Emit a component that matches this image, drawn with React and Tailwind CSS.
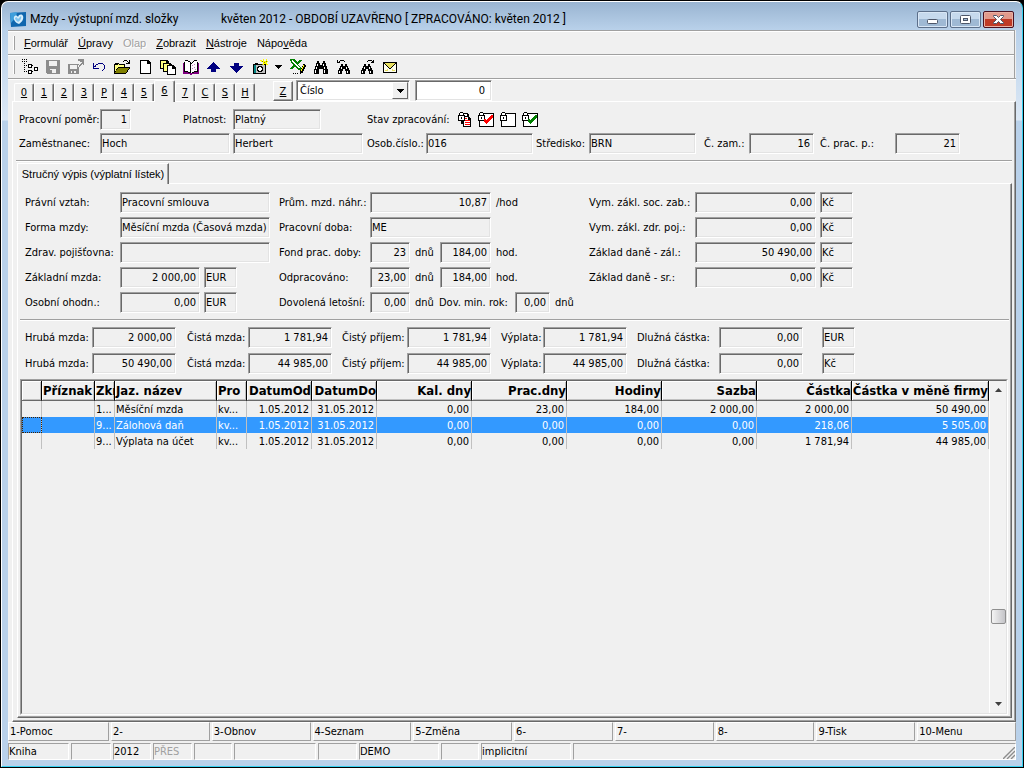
import { useState } from 'react';
import clsx from 'clsx';

const fieldBox =
  'h-[21px] border border-t-[#a0a0a0] border-l-[#a0a0a0] border-r-white border-b-white shadow-[inset_1px_1px_#696969,inset_-1px_-1px_#e3e3e3]';

const Icon = ({ children }) => (
  <svg width="16" height="16" viewBox="0 0 16 16" shapeRendering="crispEdges" className="block shrink-0">
    {children}
  </svg>
);

const BINOCULARS =
  'M4 2h2v2H4zM10 2h2v2h-2zM3 4h4v3H3zM9 4h4v3H9zM7 6h2v4H7zM2 7h5v3H2zM9 7h5v3H9zM1 10h5v5H1zM10 10h5v5h-5z';
const BINOCULARS_SMALL =
  'M5 5h2v2H5zM9 5h2v2H9zM4 7h8v3H4zM3 9h4v3H3zM9 9h4v3H9zM2 11h4v4H2zM10 11h4v4h-4z';

const icons = {
  tree: (
    <Icon>
      <path d="M0 0h1v1H0zM2 0h1v1H2zM4 0h1v1H4zM0 2h1v1H0zM4 2h1v1H4zM2 2h1v1H2zM2 4h1v1H2zM2 6h1v1H2zM4 6h1v1H4zM2 8h1v1H2zM2 10h1v1H2zM2 12h1v1H2zM4 12h1v1H4zM10 6h1v1h-1zM10 12h1v1h-1z" />
      <path d="M6 5h4v4H6zM6 11h4v4H6zM12 8h4v4h-4z" />
      <path fill="#fff" d="M7 6h2v2H7zM7 12h2v2H7zM13 9h2v2h-2z" />
    </Icon>
  ),
  save: (
    <Icon>
      <path fill="#8c8c8c" d="M1 1h14v14H2L1 14z" />
      <path fill="#f0f0f0" d="M4 2h8v5H4zM5 10h6v4H5z" />
      <path fill="#8c8c8c" d="M5 11h2v3H5z" />
    </Icon>
  ),
  export: (
    <Icon>
      <path fill="#8c8c8c" d="M0 5h11v10H0zM10 0h6v6h-1V4l-5 5-1-1 5-5-4-1z" />
      <path fill="#f0f0f0" d="M2 6h7v4H2zM3 12h5v2H3zM10 6h1v2h-1z" />
      <path fill="#8c8c8c" d="M4 12h2v2H4z" />
    </Icon>
  ),
  undo: (
    <Icon>
      <path fill="#000080" d="M2 4h1v5h5v1H2zM3 7h1v1H3zM4 6h1v2H4zM5 5h2v1H5zM7 4h5v1H7zM12 5h1v1h-1zM13 6h1v4h-1zM12 10h1v1h-1zM11 11h1v1h-1z" />
    </Icon>
  ),
  open: (
    <Icon>
      <path d="M0 5h1V4h4v1h6v3h5v1l-4 6H0z" />
      <path fill="#ffff80" d="M1 6h3V5h1v1h5v2H4l-3 5z" />
      <path fill="#808000" d="M4 9h11l-3 5H1z" />
      <path d="M10 1h3v1h-3zM9 2h1v1H9zM13 2h1v1h-1zM15 1h1v4h-4V4h2V3h1z" />
    </Icon>
  ),
  blank: (
    <Icon>
      <path d="M3 1h8l3 3v11H3z" />
      <path fill="#fff" d="M4 2h6v3h3v9H4z" />
    </Icon>
  ),
  copies: (
    <Icon>
      <path d="M0 1h7l2 2v7H0z" />
      <path fill="#ffff80" d="M1 2h5v2h2v5H1z" />
      <path d="M3 4h7l2 2v7H3z" />
      <path fill="#ffff80" d="M4 5h5v2h2v5H4z" />
      <path d="M7 6h6l3 3v7H7z" />
      <path fill="#fff" d="M8 7h4v3h3v5H8z" />
    </Icon>
  ),
  book: (
    <Icon>
      <path fill="#800080" d="M0 4h2v9h4l2 1 2-1h4V4h2v11H10l-2 1-2-1H0z" />
      <path d="M1 3h1v10H1zM14 3h1v10h-1z" />
      <path fill="#fff" d="M2 2h3l3 3 3-4h3v11h-3l-3 2-3-2H2z" />
      <path d="M2 1h3v1H2zM5 2h2v1H5zM7 3h1v11H7zM8 4h1v-1h1V2h1V1h3v1h-3v1h-1v1H9v1H8zM2 12h3v1H2zM5 13h2v1H5zM9 13h2v1H9zM11 12h3v1h-3z" />
      <path fill="#c080c0" d="M9 6h1v1H9zM11 5h1v1h-1zM9 9h1v1H9zM11 8h1v1h-1zM12 10h1v1h-1z" />
    </Icon>
  ),
  up: (
    <Icon>
      <path fill="#000080" d="M7 3h1v1h1v1h1v1h1v1h1v1h1v1h1v1h-4v3H5v-3H1V9h1V8h1V7h1V6h1V5h1V4h1z" />
    </Icon>
  ),
  down: (
    <Icon>
      <path fill="#000080" d="M5 4h5v3h4v1h-1v1h-1v1h-1v1h-1v1H9v1H8v1H7v-1H6v-1H5v-1H4v-1H3V9H2V8H1V7h4z" />
    </Icon>
  ),
  camera: (
    <Icon>
      <path d="M1 5h2V4h3v1h8v10H1z" />
      <path fill="#008080" d="M2 6h2v8H2z" />
      <path fill="#c0c0c0" d="M4 6h9v8H4z" />
      <path d="M6 7h4v1h1v4h-1v1H6v-1H5V8h1z" />
      <path fill="#fff" d="M7 8h2v1h1v2H9v1H7v-1H6V9h1z" />
      <path fill="#ffff00" d="M8 1h2v1H8zM11 0h1v2h2V0h1v2h1v1h-1v2h1v1h-2V5h-2v1h-2V5h1V3H9V2h2z" />
      <path fill="#808000" d="M10 2h1v1h-1zM14 2h1v1h-1zM12 3h1v1h-1zM10 5h1v1h-1z" />
    </Icon>
  ),
  excel: (
    <Icon>
      <path fill="#008000" d="M0 0h4l3 3 3-2h2v1L8 5l4 5v1H8L5 8l-3 2H0V9l3-3-3-5z" />
      <path fill="#fff" d="M2 1h1v1h1v1h1v1h1v1h1v1h1v1h1v1h1v1H9V9H8V8H7V7H6V6H5V5H4V4H3V3H2z" />
      <path d="M13 5h2v1h1v2h-1v2h-1v2h-1v2h-2v1h-1v-4h1V9h1V7h1zM3 14h1v1H3zM5 14h1v1H5zM7 14h1v1H7z" />
      <path fill="#ffff00" d="M13 6h1v2h-1v2h-1v2h-1v-2h1V8h1z" />
    </Icon>
  ),
  find: (
    <Icon>
      <path d={BINOCULARS} />
      <path fill="#fff" d="M4 5h1v2H4zM10 5h1v2h-1zM3 8h1v2H3zM11 8h1v2h-1zM2 11h1v3H2zM11 11h1v3h-1z" />
    </Icon>
  ),
  findPrev: (
    <Icon>
      <path d={BINOCULARS_SMALL} />
      <path fill="#fff" d="M5 8h1v2H5zM10 8h1v2h-1zM3 12h1v2H3zM11 12h1v2h-1z" />
      <path d="M1 1h1v2h2v1H1zM3 2h1V1h4v1h1v1H8V2H4v1H3z" />
    </Icon>
  ),
  findNext: (
    <Icon>
      <path d={BINOCULARS_SMALL} />
      <path fill="#fff" d="M5 8h1v2H5zM10 8h1v2h-1zM3 12h1v2H3zM11 12h1v2h-1z" />
      <path d="M14 1h1v3h-3V3h1V2H9v1H8V2h1V1h4v1h1z" />
    </Icon>
  ),
  mail: (
    <Icon>
      <path d="M1 3h14v11H1z" />
      <path fill="#fffff0" d="M2 4h12v9H2z" />
      <path fill="#e8e060" d="M3 4h10v2h-1v1h-1v1H9v1H7V8H5V7H4V6H3zM3 11h2v-1h1v2H3zM13 11h-2v-1h-1v2h3z" />
      <path d="M2 4h1v1H2zM3 5h1v1H3zM4 6h1v1H4zM5 7h1v1H5zM6 8h1v1H6zM7 9h2v1H7zM9 8h1v1H9zM10 7h1v1h-1zM11 6h1v1h-1zM12 5h1v1h-1zM13 4h1v1h-1z" />
    </Icon>
  ),
};

const Lock = () => (
  <>
    <path d="M2 0h3v1h1v2h1v6H0V3h1V1h1z" />
    <path fill="#fff" d="M2 1h3v2H2zM1 4h5v4H1z" />
    <path d="M3 5h1v2H3z" />
  </>
);

const LockBox = ({ tick }) => (
  <Icon>
    <path d="M5 1h11v14H1V8h1V2h3z" />
    <path fill="#fff" d="M6 2h9v12H2V8h4z" />
    <Lock />
    {tick && <path fill={tick} d="M13 3h2v3h-1v1h-1v1h-1v1h-1v1h-1v1H9v1H8v-1H7v-1H6V7h2v1h1V7h1V6h1V5h1V4h1z" />}
  </Icon>
);

const LockPages = () => (
  <Icon>
    <g transform="translate(2 0)">
      <path d="M5 1h4l2 2v9H3V8h2z" />
      <path fill="#fff" d="M6 2h3v2h1v7H6z" />
      <path d="M5 4h5l3 3v8H5z" />
      <path fill="#fff" d="M6 5h4v3h2v6H6z" />
      <path fill="#f00" d="M7 6h2v1H7zM7 8h5v1H7zM7 10h5v1H7zM7 12h5v1H7z" />
      <Lock />
    </g>
  </Icon>
);

const Field = ({ id, label, value, labelClass, boxClass, right, unlabelled }) => (
  <>
    {!unlabelled && (
      <label htmlFor={id} className={clsx('shrink-0 whitespace-pre', labelClass)}>
        {label}
      </label>
    )}
    <input
      id={id}
      readOnly
      defaultValue={value}
      aria-label={unlabelled ? label : undefined}
      className={clsx(fieldBox, 'min-w-0 shrink-0 bg-[#f0f0f0] outline-none', right ? 'pr-[3px] text-right' : 'pl-px', boxClass)}
    />
  </>
);

const Row = ({ children }) => <div className="flex h-[21px] items-center">{children}</div>;

const menus = [
  ['', 'F', 'ormulář'],
  ['', 'Ú', 'pravy'],
  ['Olap', '', ''],
  ['', 'Z', 'obrazit'],
  ['', 'N', 'ástroje'],
  ['Nápo', 'v', 'ěda'],
];

const toolsLeft = [
  ['Strom', 'tree'],
  ['Uložit', 'save'],
  ['Export', 'export'],
  ['Zpět', 'undo'],
  ['Otevřít', 'open'],
  ['Nový', 'blank'],
  ['Kopie', 'copies'],
  ['Kniha', 'book'],
  ['Předchozí', 'up'],
  ['Další', 'down'],
  ['Snímek', 'camera'],
];

const toolsRight = [
  ['Excel', 'excel'],
  ['Najít', 'find'],
  ['Najít předchozí', 'findPrev'],
  ['Najít další', 'findNext'],
  ['Pošta', 'mail'],
];

const pages = ['0', '1', '2', '3', 'P', '4', '5', '6', '7', 'C', 'S', 'H'];

const columns = [
  ['', 'w-[20px]'],
  ['Příznak', 'w-[53px]'],
  ['Zkr', 'w-[20px]'],
  ['Jaz. název', 'w-[102px]'],
  ['Pro', 'w-[30px]'],
  ['DatumOd', 'w-[65px]', true],
  ['DatumDo', 'w-[65px]', true],
  ['Kal. dny', 'w-[95px]', true],
  ['Prac.dny', 'w-[95px]', true],
  ['Hodiny', 'w-[95px]', true],
  ['Sazba', 'w-[95px]', true],
  ['Částka', 'w-[95px]', true],
  ['Částka v měně firmy', 'w-auto', true],
];

const rows = [
  ['', '', '1...', 'Měsíční mzda', 'kv...', '1.05.2012', '31.05.2012', '0,00', '23,00', '184,00', '2 000,00', '2 000,00', '50 490,00'],
  ['', '', '9...', 'Zálohová daň', 'kv...', '1.05.2012', '31.05.2012', '0,00', '0,00', '0,00', '0,00', '218,06', '5 505,00'],
  ['', '', '9...', 'Výplata na účet', 'kv...', '1.05.2012', '31.05.2012', '0,00', '0,00', '0,00', '0,00', '1 781,94', '44 985,00'],
];

const totals = [
  { key: 'eur', gross: '2 000,00', net: '1 781,94', debt: '0,00', currency: 'EUR' },
  { key: 'czk', gross: '50 490,00', net: '44 985,00', debt: '0,00', currency: 'Kč' },
];

const functionKeys = ['1-Pomoc', '2-', '3-Obnov', '4-Seznam', '5-Změna', '6-', '7-', '8-', '9-Tisk', '10-Menu'];

const statusCells = [
  ['Kniha', 'w-[61px]'],
  ['', 'w-[40px]'],
  ['2012', 'w-[38px]'],
  ['PŘES', 'w-[39px] text-[#a0a0a0]'],
  ['', 'w-[38px]'],
  ['', 'w-[82px]'],
  ['', 'w-[39px]'],
  ['DEMO', 'w-[80px]'],
  ['', 'w-[38px]'],
  ['implicitní', 'w-[90px]'],
];

const Grip = () => <span className="ml-[5px] h-[14px] w-[2px] shrink-0 border-r border-[#a0a0a0] bg-white" />;

const ToolButton = ({ name, icon }) => (
  <button type="button" aria-label={name} className="flex h-[22px] w-[23px] items-center justify-center">
    {icons[icon]}
  </button>
);

const TitleBar = () => (
  <header className="flex h-[28px] items-center justify-between pl-[2px] font-['Roboto','Noto_Sans',sans-serif] text-xs">
    <div className="flex items-center pt-[6px]">
      <svg width="17" height="17" viewBox="0 0 17 17" className="mr-[3px]">
        <path d="M0 2l16-1v14L1 16z" fill="#0f66ae" />
        <path d="M0 2l7-1-1 5-5 6z" fill="#3f9fdc" />
        <path d="M4 6c1-2 3-2 4 0 1-3 4-3 5-1 1 3-1 6-4 8C6 12 3 9 4 6z" fill="#d8effc" />
        <path d="M5 7c1-1 2-1 3 1l3-3c1 2-1 5-3 6-1-1-3-2-3-4z" fill="#7fc3ee" />
      </svg>
      <h1 className="w-[191px] whitespace-nowrap">Mzdy - výstupní mzd. složky</h1>
      <span className="whitespace-nowrap">květen 2012 - OBDOBÍ UZAVŘENO [ ZPRACOVÁNO: květen 2012 ]</span>
    </div>
    <div className="flex gap-[2px] pt-[6px] pr-[2px]">
      <button type="button" aria-label="Minimalizovat" className="flex h-[17px] w-[31px] items-center justify-center rounded-[2px] border border-[#5c6f8a] bg-linear-to-b from-[#c6d9ed] from-50% to-[#9fb9d4] to-50% shadow-[inset_0_0_0_1px_#d8e6f5]">
        <svg width="13" height="11" viewBox="0 0 13 11">
          <rect x="1.5" y="5.5" width="10" height="4" rx="1" fill="#fff" stroke="#4d5669" />
        </svg>
      </button>
      <button type="button" aria-label="Obnovit" className="flex h-[17px] w-[31px] items-center justify-center rounded-[2px] border border-[#5c6f8a] bg-linear-to-b from-[#c6d9ed] from-50% to-[#9fb9d4] to-50% shadow-[inset_0_0_0_1px_#d8e6f5]">
        <svg width="13" height="11" viewBox="0 0 13 11">
          <rect x="1.5" y="1.5" width="10" height="8" rx="1" fill="#fff" stroke="#4d5669" />
          <rect x="4.5" y="4.5" width="4" height="2" fill="#9fb9d4" stroke="#4d5669" />
        </svg>
      </button>
      <button type="button" aria-label="Zavřít" className="flex h-[17px] w-[31px] items-center justify-center rounded-[2px] border border-[#4a1020] bg-linear-to-b from-[#e29a8c] from-50% to-[#bf3a26] to-50% shadow-[inset_0_0_0_1px_#e8b0a4]">
        <svg width="13" height="11" viewBox="0 0 13 11">
          <path d="M1.5 1.5h3l2 2 2-2h3v1l-3 3 3 3v1h-3l-2-2-2 2h-3v-1l3-3-3-3z" fill="#fff" stroke="#4d5669" />
        </svg>
      </button>
    </div>
  </header>
);

const Toolbars = () => (
  <div className="mr-px border-r border-[#a0a0a0]">
    <nav className="flex h-[24px] items-center border-t border-[#a0a0a0] font-['Liberation_Sans',Arial,sans-serif] shadow-[inset_0_1px_white]">
      <Grip />
      <div className="ml-[9px] flex gap-[10px] pt-px">
        {menus.map(([before, key, after]) => (
          <button
            key={before + key}
            type="button"
            disabled={!key}
            className="whitespace-nowrap disabled:text-[#a0a0a0] disabled:[text-shadow:1px_1px_white]"
          >
            {before}
            <u>{key}</u>
            {after}
          </button>
        ))}
      </div>
    </nav>
    <div className="flex h-[24px] items-center border-t border-[#a0a0a0] shadow-[inset_0_1px_white]">
      <Grip />
      <div className="ml-[3px] flex items-center">
        {toolsLeft.map(([name, icon]) => (
          <ToolButton key={icon} name={name} icon={icon} />
        ))}
        <button type="button" aria-label="Možnosti snímku" className="flex h-[22px] w-[15px] items-center justify-center">
          <svg width="7" height="4" viewBox="0 0 7 4" shapeRendering="crispEdges">
            <path d="M0 0h7v1H6v1H5v1H4v1H3V3H2V2H1V1H0z" />
          </svg>
        </button>
        {toolsRight.map(([name, icon]) => (
          <ToolButton key={icon} name={name} icon={icon} />
        ))}
      </div>
    </div>
  </div>
);

const PageTabs = ({ active, onSelect }) => (
  <div className="flex h-[23px] items-end border-t border-[#a0a0a0] pl-[6px] shadow-[inset_0_1px_white]">
    <div role="tablist" className="flex items-end">
      {pages.map((page) => (
        <button
          key={page}
          type="button"
          role="tab"
          aria-selected={page === active}
          onClick={() => onSelect(page)}
          className={clsx(
            'rounded-t-[2px] border-t border-l border-r border-t-white border-l-white border-r-[#696969] bg-[#f0f0f0] underline shadow-[inset_-1px_0_#a0a0a0]',
            page === active ? 'z-10 -mb-px h-[22px] w-[21px] pb-[2px]' : 'h-[18px] w-[20px]'
          )}
        >
          {page}
        </button>
      ))}
    </div>
    <button
      type="button"
      className="ml-[18px] h-[20px] w-[20px] border border-t-white border-l-white border-r-[#696969] border-b-[#696969] underline shadow-[inset_-1px_-1px_#a0a0a0]"
    >
      Z
    </button>
    <div className={clsx(fieldBox, 'relative ml-[3px] w-[114px] bg-white')}>
      <select aria-label="Řadit podle" className="h-full w-full appearance-none bg-transparent pl-[3px] outline-none">
        <option>Číslo</option>
      </select>
      <span className="pointer-events-none absolute top-px right-px flex h-[17px] w-[16px] items-center justify-center border border-t-white border-l-white border-r-[#696969] border-b-[#696969] bg-[#f0f0f0]">
        <svg width="7" height="4" viewBox="0 0 7 4" shapeRendering="crispEdges">
          <path d="M0 0h7v1H6v1H5v1H4v1H3V3H2V2H1V1H0z" />
        </svg>
      </span>
    </div>
    <input
      aria-label="Hledaná hodnota"
      defaultValue="0"
      className={clsx(fieldBox, 'ml-[5px] w-[77px] bg-white pr-[6px] text-right outline-none')}
    />
  </div>
);

const EmployeeHeader = () => (
  <div className="flex flex-col gap-[3px] pl-[6px]">
    <Row>
      <Field id="pomer" label="Pracovní poměr:" value="1" labelClass="w-[81px]" boxClass="w-[31px]" right />
      <span className="w-[52px]" />
      <Field id="platnost" label="Platnost:" value="Platný" labelClass="w-[50px]" boxClass="w-[88px]" />
      <span className="ml-[46px] w-[89px] whitespace-nowrap">Stav zpracování:</span>
      <span className="flex gap-[6px]">
        <LockPages />
        <LockBox tick="#ff0000" />
        <LockBox />
        <LockBox tick="#008000" />
      </span>
    </Row>
    <Row>
      <Field id="prijmeni" label="Zaměstnanec:" value="Hoch" labelClass="w-[81px]" boxClass="w-[130px]" />
      <span className="w-[3px]" />
      <Field id="jmeno" label="Jméno" value="Herbert" boxClass="w-[130px]" unlabelled />
      <span className="w-[4px]" />
      <Field id="osobni" label="Osob.číslo.:" value="016" labelClass="w-[59px]" boxClass="w-[107px]" />
      <span className="w-[3px]" />
      <Field id="stredisko" label="Středisko:" value="BRN" labelClass="w-[53px]" boxClass="w-[107px]" />
      <span className="w-[8px]" />
      <Field id="zam" label="Č. zam.:" value="16" labelClass="w-[45px]" boxClass="w-[65px]" right />
      <span className="w-[6px]" />
      <Field id="prac" label="Č. prac. p.:" value="21" labelClass="w-[75px]" boxClass="w-[65px]" right />
    </Row>
  </div>
);

const PayDetails = () => (
  <div className="flex pl-[7px]">
    <div className="flex w-[254px] shrink-0 flex-col gap-1">
      <Row>
        <Field id="vztah" label="Právní vztah:" value="Pracovní smlouva" labelClass="w-[95px]" boxClass="w-[150px]" />
      </Row>
      <Row>
        <Field id="forma" label="Forma mzdy:" value="Měsíční mzda (Časová mzda)" labelClass="w-[95px]" boxClass="w-[150px]" />
      </Row>
      <Row>
        <Field id="pojistovna" label="Zdrav. pojišťovna:" value="" labelClass="w-[95px]" boxClass="w-[150px]" />
      </Row>
      <Row>
        <Field id="zakladni" label="Základní mzda:" value="2 000,00" labelClass="w-[95px]" boxClass="mr-[4px] w-[80px]" right />
        <Field id="zakladni-mena" label="Měna základní mzdy" value="EUR" boxClass="w-[33px]" unlabelled />
      </Row>
      <Row>
        <Field id="ohodnoceni" label="Osobní ohodn.:" value="0,00" labelClass="w-[95px]" boxClass="mr-[4px] w-[80px]" right />
        <Field id="ohodnoceni-mena" label="Měna ohodnocení" value="EUR" boxClass="w-[33px]" unlabelled />
      </Row>
    </div>
    <div className="flex w-[310px] shrink-0 flex-col gap-1">
      <Row>
        <Field id="prumer" label="Prům. mzd. náhr.:" value="10,87" labelClass="w-[91px]" boxClass="mr-[5px] w-[121px]" right />
        <span>/hod</span>
      </Row>
      <Row>
        <Field id="doba" label="Pracovní doba:" value="ME" labelClass="w-[91px]" boxClass="w-[121px]" />
      </Row>
      <Row>
        <Field id="fond-dny" label="Fond prac. doby:" value="23" labelClass="w-[91px]" boxClass="mr-[5px] w-[40px]" right />
        <span className="w-[25px]">dnů</span>
        <Field id="fond-hod" label="Fond hodin" value="184,00" boxClass="mr-[5px] w-[51px]" right unlabelled />
        <span>hod.</span>
      </Row>
      <Row>
        <Field id="odprac-dny" label="Odpracováno:" value="23,00" labelClass="w-[91px]" boxClass="mr-[5px] w-[40px]" right />
        <span className="w-[25px]">dnů</span>
        <Field id="odprac-hod" label="Odpracováno hodin" value="184,00" boxClass="mr-[5px] w-[51px]" right unlabelled />
        <span>hod.</span>
      </Row>
      <Row>
        <Field id="dovolena" label="Dovolená letošní:" value="0,00" labelClass="w-[91px]" boxClass="mr-[5px] w-[40px]" right />
        <span className="w-[24px]">dnů</span>
        <Field id="dovolena-min" label="Dov. min. rok:" value="0,00" labelClass="w-[76px]" boxClass="mr-[5px] w-[35px]" right />
        <span>dnů</span>
      </Row>
    </div>
    <div className="flex flex-col gap-1">
      {[
        ['soc', 'Vym. zákl. soc. zab.:', '0,00'],
        ['zdr', 'Vym. zákl. zdr. poj.:', '0,00'],
        ['dan-zal', 'Základ daně - zál.:', '50 490,00'],
        ['dan-sr', 'Základ daně - sr.:', '0,00'],
      ].map(([id, label, value]) => (
        <Row key={id}>
          <Field id={id} label={label} value={value} labelClass="w-[106px]" boxClass="mr-[4px] w-[121px]" right />
          <Field id={`${id}-mena`} label="Měna" value="Kč" boxClass="w-[33px]" unlabelled />
        </Row>
      ))}
    </div>
  </div>
);

const Totals = () => (
  <div className="flex flex-col gap-[5px] pl-[7px]">
    {totals.map(({ key, gross, net, debt, currency }) => (
      <Row key={key}>
        <Field id={`hruba-${key}`} label="Hrubá mzda:" value={gross} labelClass="w-[67px]" boxClass="mr-[11px] w-[84px]" right />
        <Field id={`cista-${key}`} label="Čistá mzda:" value={net} labelClass="w-[61px]" boxClass="mr-[10px] w-[84px]" right />
        <Field id={`prijem-${key}`} label="Čistý příjem:" value={net} labelClass="w-[65px]" boxClass="mr-[10px] w-[84px]" right />
        <Field id={`vyplata-${key}`} label="Výplata:" value={net} labelClass="w-[42px]" boxClass="mr-[10px] w-[84px]" right />
        <Field id={`dluh-${key}`} label="Dlužná částka:" value={debt} labelClass="w-[82px]" boxClass="mr-[19px] w-[84px]" right />
        <Field id={`mena-${key}`} label="Měna" value={currency} boxClass="w-[33px]" unlabelled />
      </Row>
    ))}
  </div>
);

const ScrollBar = () => (
  <div className="flex w-[17px] shrink-0 flex-col items-center border-l border-white bg-[#f2f2f2]">
    <svg width="7" height="4" viewBox="0 0 7 4" className="mt-[7px] mb-[6px]">
      <path d="M0 4l3.5-4L7 4z" fill="#404040" />
    </svg>
    <div className="flex-[212]" />
    <div className="h-[15px] w-[15px] rounded-[2px] border border-[#8f8f8f] bg-linear-to-r from-[#f4f4f4] to-[#c4c4c8]" />
    <div className="flex-[78]" />
    <svg width="7" height="4" viewBox="0 0 7 4" className="mb-[7px]">
      <path d="M0 0l3.5 4L7 0z" fill="#404040" />
    </svg>
  </div>
);

const PayTable = () => {
  const [selected, setSelected] = useState(1);

  return (
    <div className="mr-[3px] ml-[2px] flex flex-1 border border-t-[#a0a0a0] border-l-[#a0a0a0] border-r-white border-b-white">
      <div className="flex min-w-0 flex-1 border border-t-[#696969] border-l-[#696969] border-r-[#e3e3e3] border-b-[#e3e3e3]">
        <div className="min-w-0 flex-1">
          <table className="w-full table-fixed border-separate border-spacing-0">
            <thead>
              <tr className="h-[20px]">
                {columns.map(([title, width, right]) => (
                  <th
                    key={title}
                    className={clsx(
                      'overflow-hidden border-r border-b border-r-black border-b-[#696969] p-0 text-[13px] leading-[18px] font-bold whitespace-nowrap shadow-[inset_1px_1px_white,inset_-1px_-1px_#c0c0c0]',
                      right ? 'text-right' : 'pl-px text-left',
                      width
                    )}
                  >
                    {title}
                  </th>
                ))}
              </tr>
            </thead>
            <tbody>
              {rows.map((row, r) => (
                <tr key={row[3]} onClick={() => setSelected(r)} className={clsx('h-[16px]', r === selected && 'bg-[#3399ff] text-white')}>
                  {row.map((cell, c) => (
                    <td
                      key={columns[c][0]}
                      className={clsx(
                        'overflow-hidden border-r border-[#c0c0c0] p-0 pt-px leading-[15px] whitespace-nowrap',
                        columns[c][2] ? 'pr-[2px] text-right' : 'pl-px',
                        r === selected && c === 0 && 'outline outline-dotted -outline-offset-1 outline-[#402000]'
                      )}
                    >
                      {cell}
                    </td>
                  ))}
                </tr>
              ))}
            </tbody>
          </table>
        </div>
        <ScrollBar />
      </div>
    </div>
  );
};

const StatusBars = () => (
  <footer className="flex flex-col gap-[2px]">
    <div className="grid grid-cols-[101px_repeat(9,1fr)] gap-[2px]">
      {functionKeys.map((label) => (
        <button
          key={label}
          type="button"
          className="h-[19px] border border-t-white border-l-white border-r-[#a0a0a0] border-b-[#a0a0a0] pl-px text-left whitespace-nowrap"
        >
          {label}
        </button>
      ))}
    </div>
    <div className="flex gap-[2px]">
      {statusCells.map(([text, look], i) => (
        <div
          key={i}
          className={clsx('h-[17px] shrink-0 border border-t-[#a0a0a0] border-l-[#a0a0a0] border-r-white border-b-white', look)}
        >
          {text}
        </div>
      ))}
      <div className="flex h-[17px] flex-1 items-end justify-end border border-t-[#a0a0a0] border-l-[#a0a0a0] border-r-white border-b-white">
        <svg width="12" height="12" viewBox="0 0 12 12">
          <path d="M0 12L12 0M4 12l8-8M8 12l4-4" stroke="#8c8c8c" strokeWidth="1.4" />
        </svg>
      </div>
    </div>
  </footer>
);

export default function App() {
  const [page, setPage] = useState('6');

  return (
    <div className="flex min-h-screen flex-col bg-black p-px font-['DejaVu_Sans_Condensed','DejaVu_Sans',sans-serif] text-[11px] leading-[15px] text-black">
      <div className="flex flex-1 flex-col rounded-t-[7px] border border-t-white border-l-white border-r-[#35d0f0] border-b-[#35d0f0] bg-[linear-gradient(to_bottom,#99b4d1_0,#b9d1ea_28px,#dce8f5_118px,#b9d1ea_119px)] px-[6px] pb-[6px]">
        <TitleBar />
        <div className="flex flex-1 flex-col bg-[#f0f0f0]">
          <Toolbars />
          <PageTabs active={page} onSelect={setPage} />
          <main className="ml-1 flex flex-1 flex-col border border-t-white border-l-white border-r-[#696969] border-b-[#696969] pt-[7px] pr-[3px] pb-[3px] shadow-[inset_-1px_-1px_#a0a0a0]">
            <EmployeeHeader />
            <div className="mt-[6px] ml-[3px] h-[3px] border-t border-[#a0a0a0] shadow-[inset_0_1px_white]" />
            <div role="tablist" className="ml-[4px] flex">
              <button
                type="button"
                role="tab"
                aria-selected="true"
                className="z-10 -mb-px h-[21px] w-[152px] border-t border-r border-l border-t-white border-r-[#696969] border-l-white bg-[#f0f0f0] font-['Liberation_Sans',Arial,sans-serif] whitespace-nowrap shadow-[inset_-1px_0_#a0a0a0]"
              >
                Stručný výpis (výplatní lístek)
              </button>
            </div>
            <section className="ml-[4px] flex flex-1 flex-col border border-t-white border-l-white border-r-[#696969] border-b-[#696969] pt-[8px] pb-[2px] shadow-[inset_-1px_-1px_#a0a0a0]">
              <PayDetails />
              <hr className="mx-[2px] mt-[6px] mb-[7px] border-t border-[#a0a0a0] shadow-[0_1px_white]" />
              <Totals />
              <div className="h-[5px]" />
              <PayTable />
            </section>
          </main>
          <StatusBars />
        </div>
      </div>
    </div>
  );
}
